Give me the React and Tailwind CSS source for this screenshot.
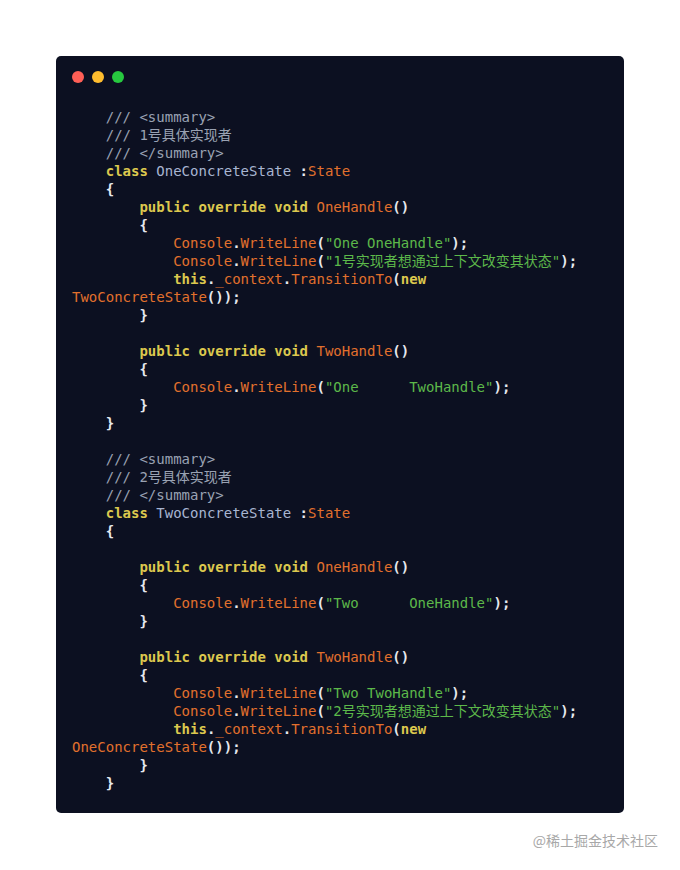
import React from "react";

const C = {
  c: "text-[#9aa2b3]",
  k: "text-[#dcc84e] font-bold",
  t: "text-[#a8b5d1]",
  o: "text-[#e2702d]",
  s: "text-[#5cb84a]",
  p: "text-[#e6e8ee] font-bold",
};

const sp = (n) => " ".repeat(n);

const lines = [
  [[sp(4) + "/// <summary>", "c"]],
  [[sp(4) + "/// 1号具体实现者", "c"]],
  [[sp(4) + "/// </summary>", "c"]],
  [[sp(4), "p"], ["class", "k"], [" OneConcreteState ", "t"], [":", "p"], ["State", "o"]],
  [[sp(4) + "{", "p"]],
  [[sp(8), "p"], ["public override void", "k"], [" ", "p"], ["OneHandle", "o"], ["()", "p"]],
  [[sp(8) + "{", "p"]],
  [[sp(12), "p"], ["Console", "o"], [".", "p"], ["WriteLine", "o"], ["(", "p"], ['"One OneHandle"', "s"], [");", "p"]],
  [[sp(12), "p"], ["Console", "o"], [".", "p"], ["WriteLine", "o"], ["(", "p"], ['"1号实现者想通过上下文改变其状态"', "s"], [");", "p"]],
  [[sp(12), "p"], ["this", "k"], [".", "p"], ["_context", "o"], [".", "p"], ["TransitionTo", "o"], ["(", "p"], ["new", "k"]],
  [["TwoConcreteState", "o"], ["());", "p"]],
  [[sp(8) + "}", "p"]],
  [["", "p"]],
  [[sp(8), "p"], ["public override void", "k"], [" ", "p"], ["TwoHandle", "o"], ["()", "p"]],
  [[sp(8) + "{", "p"]],
  [[sp(12), "p"], ["Console", "o"], [".", "p"], ["WriteLine", "o"], ["(", "p"], ['"One      TwoHandle"', "s"], [");", "p"]],
  [[sp(8) + "}", "p"]],
  [[sp(4) + "}", "p"]],
  [["", "p"]],
  [[sp(4) + "/// <summary>", "c"]],
  [[sp(4) + "/// 2号具体实现者", "c"]],
  [[sp(4) + "/// </summary>", "c"]],
  [[sp(4), "p"], ["class", "k"], [" TwoConcreteState ", "t"], [":", "p"], ["State", "o"]],
  [[sp(4) + "{", "p"]],
  [["", "p"]],
  [[sp(8), "p"], ["public override void", "k"], [" ", "p"], ["OneHandle", "o"], ["()", "p"]],
  [[sp(8) + "{", "p"]],
  [[sp(12), "p"], ["Console", "o"], [".", "p"], ["WriteLine", "o"], ["(", "p"], ['"Two      OneHandle"', "s"], [");", "p"]],
  [[sp(8) + "}", "p"]],
  [["", "p"]],
  [[sp(8), "p"], ["public override void", "k"], [" ", "p"], ["TwoHandle", "o"], ["()", "p"]],
  [[sp(8) + "{", "p"]],
  [[sp(12), "p"], ["Console", "o"], [".", "p"], ["WriteLine", "o"], ["(", "p"], ['"Two TwoHandle"', "s"], [");", "p"]],
  [[sp(12), "p"], ["Console", "o"], [".", "p"], ["WriteLine", "o"], ["(", "p"], ['"2号实现者想通过上下文改变其状态"', "s"], [");", "p"]],
  [[sp(12), "p"], ["this", "k"], [".", "p"], ["_context", "o"], [".", "p"], ["TransitionTo", "o"], ["(", "p"], ["new", "k"]],
  [["OneConcreteState", "o"], ["());", "p"]],
  [[sp(8) + "}", "p"]],
  [[sp(4) + "}", "p"]],
];

export default function App() {
  return (
    <div className="w-[680px] min-h-[870px] bg-white pt-[56px]">
      <div className="mx-[56px] rounded-[5px] bg-[#0c1021] px-[16px] pt-[15px] pb-[21px]">
        <div className="flex gap-[8px]">
          <span className="h-[12px] w-[12px] rounded-full bg-[#ff5f56]" />
          <span className="h-[12px] w-[12px] rounded-full bg-[#ffbd2e]" />
          <span className="h-[12px] w-[12px] rounded-full bg-[#27c93f]" />
        </div>
        <pre
          className="mt-[25px] text-[14px] leading-[18px] whitespace-pre"
          style={{ fontFamily: '"DejaVu Sans Mono", "Noto Sans CJK SC", monospace' }}
        >
          {lines.map((line, i) => (
            <div key={i} className="h-[18px]">
              {line.map(([txt, cls], j) => (
                <span key={j} className={C[cls]}>
                  {txt}
                </span>
              ))}
            </div>
          ))}
        </pre>
      </div>
      <div
        className="mt-[17px] pr-[22px] text-right text-[14px] leading-[20px] text-[#a8a8a8]"
        style={{ fontFamily: '"Noto Sans CJK SC", sans-serif' }}
      >
        @稀土掘金技术社区
      </div>
    </div>
  );
}
